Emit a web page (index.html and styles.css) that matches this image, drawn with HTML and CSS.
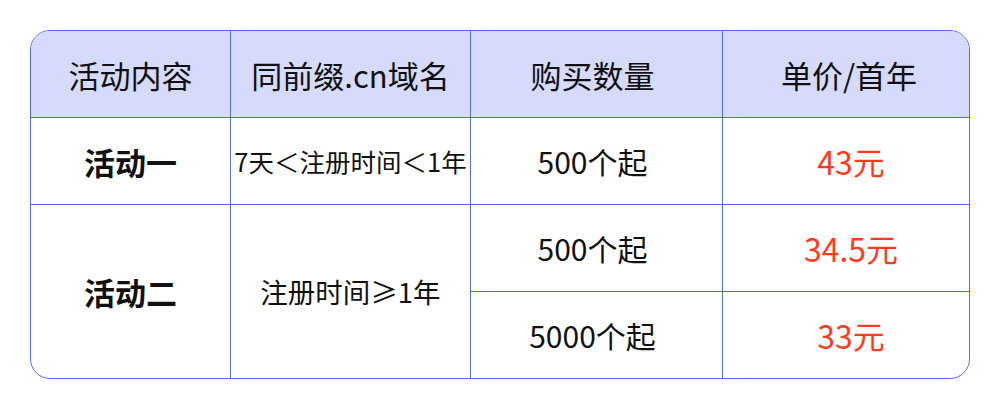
FILE: index.html
```html
<!DOCTYPE html>
<html lang="zh-CN">
<head>
<meta charset="utf-8">
<title>活动价格</title>
<link rel="stylesheet" href="styles.css">
</head>
<body>
<div class="page">
  <div class="table">
    <div class="cell head">活动内容</div>
    <div class="cell head">同前缀.cn域名</div>
    <div class="cell head qty">购买数量</div>
    <div class="cell head last unit">单价/首年</div>

    <div class="cell name">活动一</div>
    <div class="cell tight">7天＜注册时间＜1年</div>
    <div class="cell qty">500个起</div>
    <div class="cell price last">43元</div>

    <div class="cell name span2 bottom">活动二</div>
    <div class="cell span2 bottom mid">注册时间≥1年</div>
    <div class="cell qty">500个起</div>
    <div class="cell price last">34.5元</div>
    <div class="cell qty bottom">5000个起</div>
    <div class="cell price last bottom">33元</div>
  </div>
</div>
</body>
</html>
```

FILE: styles.css
```css
html, body {
  margin: 0;
  padding: 0;
  background: #ffffff;
}

.page {
  padding: 30px 0 0 30px;
  width: 1000px;
  height: 410px;
  box-sizing: border-box;
  font-family: "Noto Sans CJK SC", "Noto Sans", sans-serif;
  color: #111111;
}

.table {
  width: 940px;
  box-sizing: border-box;
  border: 1px solid #5469f2;
  border-radius: 20px;
  overflow: hidden;
  display: grid;
  grid-template-columns: 200px 240px 252px 246px;
  grid-template-rows: 87px 87px 87px 86px;
}

.cell {
  display: flex;
  align-items: center;
  justify-content: center;
  border-right: 1px solid #5469f2;
  border-bottom: 1px solid #5469f2;
  font-size: 30px;
  line-height: 1;
  white-space: nowrap;
}

.cell.last {
  border-right: none;
}

.cell.bottom {
  border-bottom: none;
}

.head {
  background: #d6dafd;
  font-size: 31px;
}

.name {
  font-weight: 700;
  font-size: 31px;
}

.span2 {
  grid-row: span 2;
}

.tight {
  font-size: 25.5px;
}

.mid {
  font-size: 27.5px;
}

.qty {
  padding-right: 8px;
}

.unit {
  padding-left: 6px;
}

.price {
  color: #ff3b1d;
  font-size: 32px;
  padding-left: 10px;
}
```
